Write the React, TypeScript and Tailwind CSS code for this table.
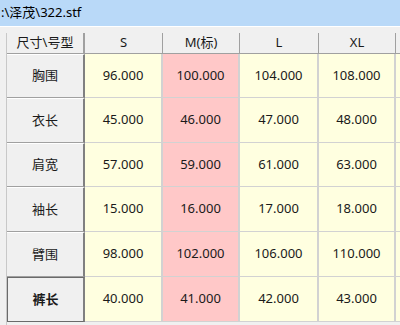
const COLS = ['S', 'M(标)', 'L', 'XL'];

const ROWS: { name: string; values: string[] }[] = [
  { name: '胸围', values: ['96.000', '100.000', '104.000', '108.000'] },
  { name: '衣长', values: ['45.000', '46.000', '47.000', '48.000'] },
  { name: '肩宽', values: ['57.000', '59.000', '61.000', '63.000'] },
  { name: '袖长', values: ['15.000', '16.000', '17.000', '18.000'] },
  { name: '臂围', values: ['98.000', '102.000', '106.000', '110.000'] },
  { name: '裤长', values: ['40.000', '41.000', '42.000', '43.000'] },
];

export default function App() {
  return (
    <div
      className="w-[400px] h-[325px] overflow-hidden bg-[#f0f0f0] flex flex-col text-[13px] text-[#1a1a1a]"
      style={{ fontFamily: '"Noto Sans", "Noto Sans CJK SC", sans-serif' }}
    >
      {/* title bar */}
      <div className="h-[26px] shrink-0 bg-[#b9d9f8] flex items-center pl-px text-[13px] text-black">
        :\泽茂\322.stf
      </div>
      <div className="h-[7px] shrink-0 border-t border-white bg-[#f0f0f0]" />

      <div className="flex flex-1 min-h-0">
        <div className="w-[7px] shrink-0 border-r border-[#c8c8c8]" />

        <div className="grid grid-cols-[78px_78px_77px_79px_77px_40px] grid-rows-[21px_44px_45px_44px_45px_45px_45px] shrink-0">
          {/* header row */}
          <div className="bg-[#f0f0f0] border-r-2 border-b border-[#a0a0a0] flex items-center justify-center">
            尺寸\号型
          </div>
          {COLS.map(c => (
            <div key={c} className="bg-[#f0f0f0] border-r border-b border-[#a0a0a0] flex items-center justify-center">
              {c}
            </div>
          ))}
          <div className="bg-[#f0f0f0] border-b border-[#a0a0a0]" />

          {ROWS.map((row, i) => {
            const last = i === ROWS.length - 1;
            return (
              <div key={row.name} className="contents">
                <div
                  className={
                    last
                      ? 'bg-[#f0f0f0] border border-[#6a6a6a] border-r-2 border-r-[#808080] flex items-center justify-center font-bold'
                      : 'bg-[#f0f0f0] border-t border-t-white border-b border-b-[#a0a0a0] border-r-2 border-r-[#808080] flex items-center justify-center'
                  }
                >
                  {row.name}
                </div>
                {row.values.map((v, j) => (
                  <div
                    key={j}
                    className={
                      j === 1
                        ? 'bg-[#ffc8c8] border-r-2 border-b border-[#d2d2d2] flex items-center justify-center'
                        : 'bg-[#ffffe0] border-r-2 border-b border-[#d2d2d2] flex items-center justify-center'
                    }
                  >
                    {v}
                  </div>
                ))}
                <div className="bg-[#ffffe0] border-b border-[#d2d2d2]" />
              </div>
            );
          })}
        </div>
      </div>
    </div>
  );
}
